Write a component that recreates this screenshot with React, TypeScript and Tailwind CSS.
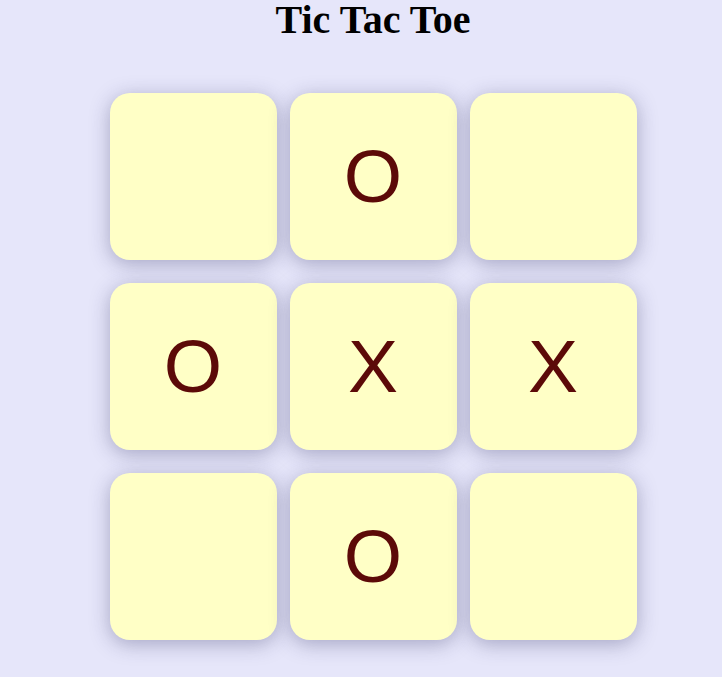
const BOARD = ['', 'O', '', 'O', 'X', 'X', '', 'O', ''];

export default function App() {
  return (
    <div className="min-h-[677px] w-full bg-[#e6e6fa] pl-6 flex flex-col items-center">
      <h1 className="text-[40px] leading-[40px] font-bold text-black font-['Liberation_Serif','Times_New_Roman',serif]">
        Tic Tac Toe
      </h1>
      <div className="mt-[53px] grid grid-cols-[repeat(3,167px)] gap-x-[13px] gap-y-[23px]">
        {BOARD.map((v, i) => (
          <button
            key={i}
            className="w-[167px] h-[167px] rounded-[20px] bg-[#ffffc6] shadow-[0_4px_20px_rgba(50,50,100,0.36)] flex items-center justify-center text-[75px] leading-none text-[#5c0a08] font-['Liberation_Sans',Arial,sans-serif]"
          >
            {v}
          </button>
        ))}
      </div>
    </div>
  );
}
